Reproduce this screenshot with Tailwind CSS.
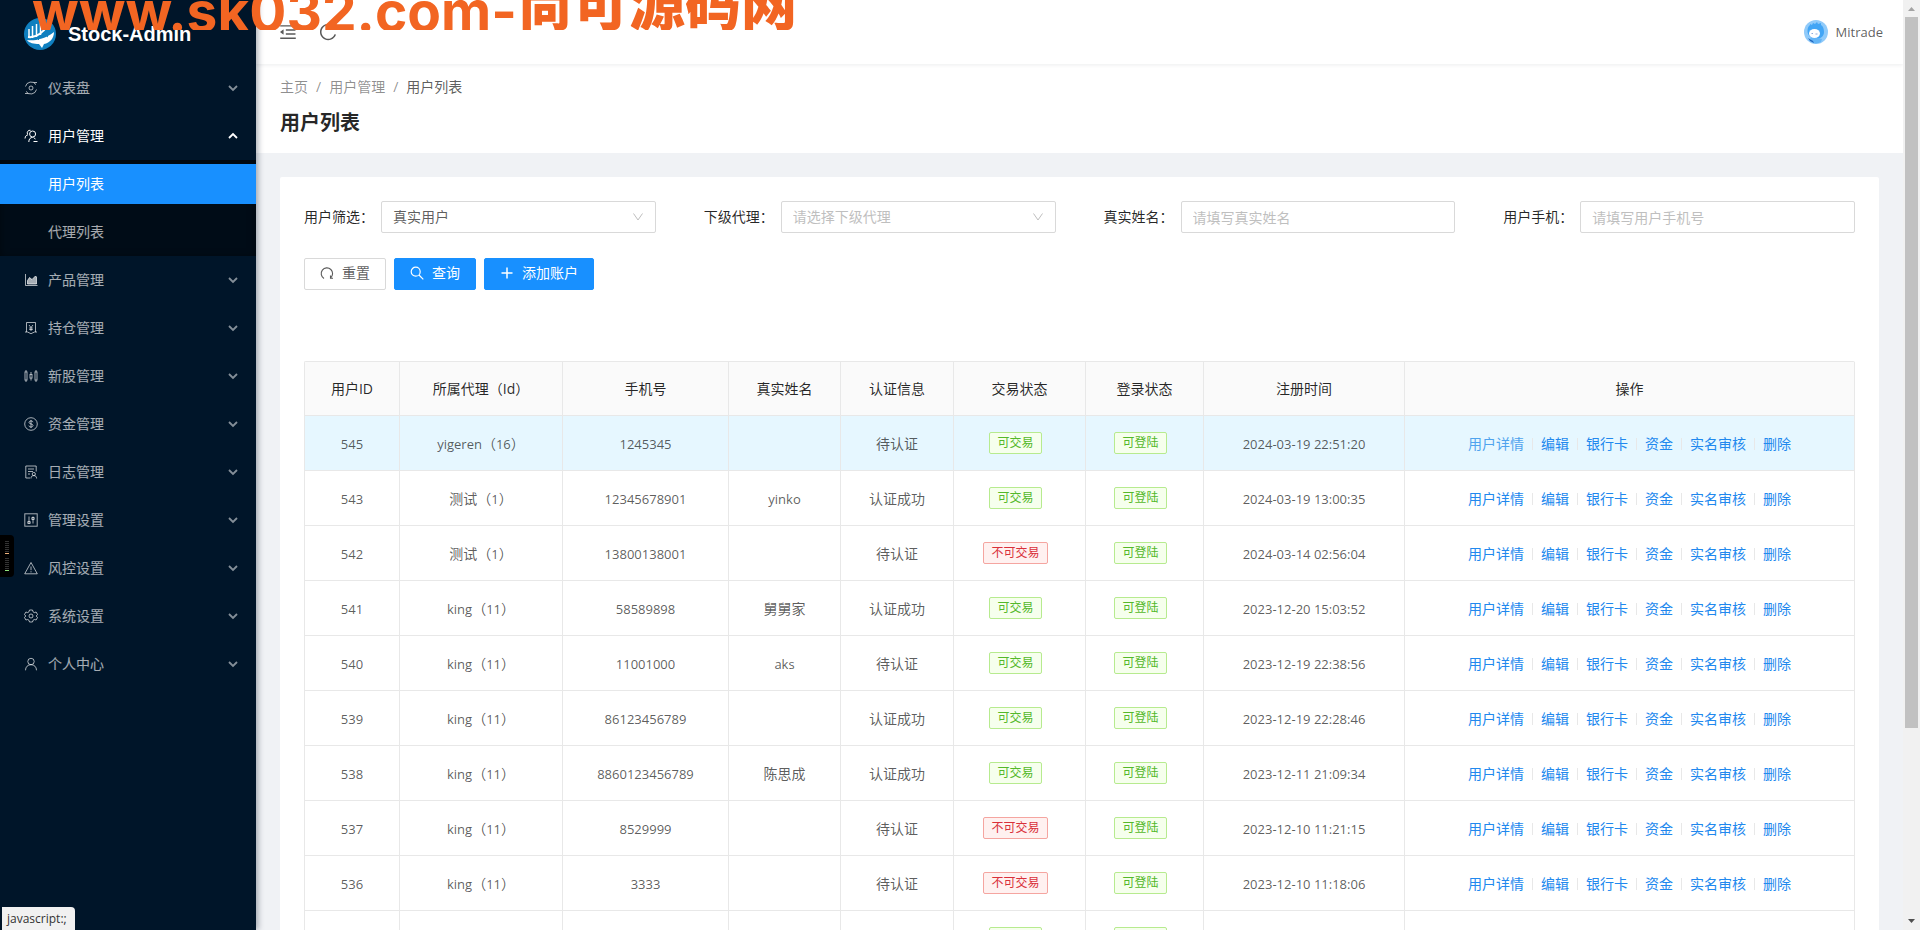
<!DOCTYPE html>
<html lang="zh-CN">
<head>
<meta charset="utf-8">
<meta name="viewport" content="width=device-width, initial-scale=1">
<title>用户列表 - Stock-Admin</title>
<script src="https://cdn.jsdelivr.net/npm/@tailwindcss/browser@4"></script>
</head>
<body class="relative flex h-screen overflow-hidden bg-[#f0f2f5] font-['Open_Sans','Noto_Sans_CJK_SC',sans-serif] text-sm text-black/65">

<aside class="relative z-10 flex h-full w-64 shrink-0 flex-col bg-[#001529] shadow-[2px_0_6px_rgba(0,21,41,0.35)]">
  <a href="#" class="flex h-16 shrink-0 items-center gap-3 pt-1 pl-6 text-white">
    <svg class="size-8" viewBox="0 0 32 32" aria-hidden="true">
      <circle cx="16" cy="16" r="16" fill="#0f7fbf"/>
      <path d="M3 22c6 1 17 0 27-8 0 6-4 11-10 12l-2 4-3-4C10 26 5 25 3 22Z" fill="#fff"/>
      <path d="M5 20V11M8.500 20V8M12.500 19V6M16.500 17V5" stroke="#fff" stroke-width="1.500" fill="none"/>
      <path d="M4 19c8 1 14-3 20-12l2-1-1 5" stroke="#fff" stroke-width="2" fill="none"/>
      <path d="M14 22l6-6 4 3" stroke="#0f7fbf" stroke-width="1" fill="none"/>
    </svg>
    <span class="font-['Liberation_Sans',sans-serif] text-xl font-bold">Stock-Admin</span>
  </a>
  <nav id="menu" class="flex flex-col"></nav>
</aside>

<div class="flex h-full min-w-0 flex-1 flex-col overflow-hidden">
  <header class="relative z-5 flex h-16 shrink-0 items-center bg-white pr-5 pl-[22px] shadow-[0_1px_4px_rgba(0,21,41,0.08)]">
    <button type="button" aria-label="收起菜单" class="mr-5">
      <svg class="size-5" viewBox="0 0 1024 1024" fill="#595959"><path d="M408 442h480c4.400 0 8-3.600 8-8v-56c0-4.400-3.600-8-8-8H408c-4.400 0-8 3.600-8 8v56c0 4.400 3.600 8 8 8zm-8 204c0 4.400 3.600 8 8 8h480c4.400 0 8-3.600 8-8v-56c0-4.400-3.600-8-8-8H408c-4.400 0-8 3.600-8 8v56zm504-486H120c-4.400 0-8 3.600-8 8v56c0 4.400 3.600 8 8 8h784c4.400 0 8-3.600 8-8v-56c0-4.400-3.600-8-8-8zm0 632H120c-4.400 0-8 3.600-8 8v56c0 4.400 3.600 8 8 8h784c4.400 0 8-3.600 8-8v-56c0-4.400-3.600-8-8-8zM115.400 518.900L271.700 642c5.800 4.600 14.400.5 14.400-6.900V388.900c0-7.400-8.500-11.500-14.400-6.900L115.400 505.100a8.740 8.740 0 0 0 0 13.800z"/></svg>
    </button>
    <button type="button" aria-label="刷新">
      <svg class="size-5" viewBox="0 0 1024 1024" fill="#595959"><path d="M909.100 209.300l-56.400 44.100C775.800 155.100 656.200 92 521.900 92 290 92 102.300 279.500 102 511.500 101.700 743.700 289.800 932 521.900 932c181.300 0 335.800-115 394.600-276.100 1.500-4.200-.7-8.900-4.900-10.300l-56.700-19.500a8 8 0 0 0-10.100 4.800c-1.800 5-3.800 10-5.900 14.900-17.300 41-42.100 77.800-73.700 109.400A344.770 344.770 0 0 1 655.900 829c-42.300 17.900-87.400 27-133.800 27-46.500 0-91.500-9.100-133.800-27A341.500 341.500 0 0 1 279 755.200a342.160 342.160 0 0 1-73.700-109.400c-17.900-42.400-27-87.400-27-133.900s9.100-91.500 27-133.900c17.300-41 42.100-77.800 73.700-109.400 31.600-31.600 68.400-56.400 109.300-73.800 42.300-17.900 87.400-27 133.800-27 46.500 0 91.500 9.100 133.800 27a341.500 341.500 0 0 1 109.300 73.800c9.900 9.900 19.200 20.400 27.800 31.400l-60.200 47a8 8 0 0 0 3 14.100l175.600 43c5 1.200 9.900-2.600 9.900-7.700l.8-180.900c-.1-6.600-7.800-10.300-13-6.200z"/></svg>
    </button>
    <a href="#" class="ml-auto flex items-center gap-2 text-[13px]">
      <svg class="size-6" viewBox="0 0 24 24" aria-hidden="true">
        <circle cx="12" cy="12" r="12" fill="#90caf9"/>
        <path d="M6 4l2 1 1-2 2 1 2-2 1 2 3-1v2c2 1 3 4 3 7 0 4-3 7-8 7S3.500 15 3.500 11C3.500 8 4.500 6 6 5Z" fill="#42a5f5"/>
        <path d="M6 18l3 5c3 1 6 0 8-1l1-3-5-1Z" fill="#64b5f6"/>
        <path d="M4 18l5 3 1 2-4-2Z" fill="#1e66c0"/>
        <ellipse cx="10.500" cy="13.500" rx="5.500" ry="4.500" fill="#fff"/>
        <path d="M7.500 13.500h1.500M11.500 14h2" stroke="#8faadc" stroke-width="1"/>
      </svg>
      <span>Mitrade</span>
    </a>
  </header>

  <div class="flex shrink-0 flex-col bg-white px-6 pt-3 pb-4">
    <nav aria-label="面包屑" class="flex h-[22px] items-center gap-2 text-black/45">
      <a href="#">主页</a><span>/</span><a href="#">用户管理</a><span>/</span><span class="text-black/65">用户列表</span>
    </nav>
    <h1 class="mt-[9px] h-[30px] text-xl leading-8 font-bold text-black/85">用户列表</h1>
  </div>

  <main class="mx-6 mt-6 rounded-xs bg-white p-6">
    <form class="grid grid-cols-4 gap-x-12 text-black/85">
      <div class="flex items-center">
        <label for="kind" class="w-[77px] shrink-0">用户筛选：</label>
        <div class="relative flex-1">
          <select id="kind" class="h-8 w-full appearance-none rounded-xs border border-[#d9d9d9] bg-white px-[11px] text-black/65"><option>真实用户</option></select>
          <svg class="pointer-events-none absolute top-2.5 right-3 size-3" viewBox="0 0 12 12" fill="none" stroke="#bfbfbf"><path d="M1.500 2.500 6 9l4.500-6.500"/></svg>
        </div>
      </div>
      <div class="flex items-center">
        <label for="agent" class="w-[77px] shrink-0">下级代理：</label>
        <div class="relative flex-1">
          <select id="agent" class="h-8 w-full appearance-none rounded-xs border border-[#d9d9d9] bg-white px-[11px] text-[#bfbfbf]"><option>请选择下级代理</option></select>
          <svg class="pointer-events-none absolute top-2.5 right-3 size-3" viewBox="0 0 12 12" fill="none" stroke="#bfbfbf"><path d="M1.500 2.500 6 9l4.500-6.500"/></svg>
        </div>
      </div>
      <div class="flex items-center">
        <label for="realname" class="w-[77px] shrink-0">真实姓名：</label>
        <input id="realname" type="text" placeholder="请填写真实姓名" class="h-8 min-w-0 flex-1 rounded-xs border border-[#d9d9d9] px-[11px] placeholder:text-[#bfbfbf]">
      </div>
      <div class="flex items-center">
        <label for="phone" class="w-[77px] shrink-0">用户手机：</label>
        <input id="phone" type="text" placeholder="请填写用户手机号" class="h-8 min-w-0 flex-1 rounded-xs border border-[#d9d9d9] px-[11px] placeholder:text-[#bfbfbf]">
      </div>
    </form>
    <div class="mt-[25px] flex gap-2">
      <button type="button" class="flex h-8 items-center gap-2 rounded-xs border border-[#d9d9d9] bg-white px-[15px] pb-0.5">
        <svg class="size-3.5" viewBox="0 0 14 14" fill="none" stroke="#595959" stroke-width="1.100"><path d="M4 12.500A5.700 5.700 0 1 1 10.500 12M10.500 9.500V12.200H13"/></svg>重置</button>
      <button type="button" class="flex h-8 items-center gap-2 rounded-xs border border-[#1890ff] bg-[#1890ff] px-[15px] pb-0.5 text-white">
        <svg class="size-3.5" viewBox="0 0 14 14" fill="none" stroke="#fff" stroke-width="1.200"><circle cx="5.700" cy="5.700" r="4.500"/><path d="M9 9l4.300 4.300"/></svg>查询</button>
      <button type="button" class="flex h-8 items-center gap-2 rounded-xs border border-[#1890ff] bg-[#1890ff] px-[15px] pb-0.5 text-white">
        <svg class="size-3.5" viewBox="0 0 14 14" fill="none" stroke="#fff" stroke-width="1.500"><path d="M7 1.500v11M1.500 7h11"/></svg>添加账户</button>
    </div>
    <table class="mt-[71px] w-full table-fixed border-separate border-spacing-0 rounded-t-xs border-t border-l border-[#e8e8e8] text-center">
      <colgroup>
        <col class="w-[95px]"><col class="w-[163px]"><col class="w-[166px]"><col class="w-[112px]"><col class="w-[113px]"><col class="w-[132px]"><col class="w-[118px]"><col class="w-[201px]"><col class="w-[450px]">
      </colgroup>
      <thead><tr id="head"></tr></thead>
      <tbody id="rows"></tbody>
    </table>
  </main>
</div>

<!-- window scrollbar -->
<div class="flex h-full w-[17px] shrink-0 flex-col items-center bg-[#f1f1f1]" aria-hidden="true">
  <svg class="h-[17px] w-[17px] shrink-0" viewBox="0 0 17 17" fill="#a3a3a3"><path d="M5 11h7L8.500 7Z"/></svg>
  <div class="h-[76.400%] w-[13px] bg-[#c1c1c1]"></div>
  <svg class="mt-auto h-[17px] w-[17px] shrink-0" viewBox="0 0 17 17" fill="#505050"><path d="M5 6h7L8.500 10Z"/></svg>
</div>

<!-- watermark banner -->
<div class="pointer-events-none absolute top-0 left-8 z-20 flex h-[30px] items-end overflow-hidden font-['Inter','Noto_Sans_CJK_SC',sans-serif] font-bold whitespace-nowrap text-[#f26522]">
  <span class="-mb-3.5 text-[55px] leading-[66px]">www.sk032.com-</span><span class="-mb-2 text-[56px] leading-[66px] font-black">尚可源码网</span>
</div>

<!-- level meter -->
<div class="absolute top-[535px] left-0 z-20 flex h-[42px] w-3.5 flex-col items-center justify-center gap-1 rounded-r-sm bg-black" aria-hidden="true">
  <div class="flex flex-col gap-px"><i class="h-px w-1 bg-[#333]"></i><i class="h-px w-1 bg-[#333]"></i><i class="h-px w-1 bg-[#333]"></i><i class="h-px w-1 bg-[#333]"></i><i class="h-px w-1 bg-[#333]"></i><i class="h-px w-1 bg-[#333]"></i><i class="h-px w-1 bg-[#f0b27a]"></i></div>
  <div class="flex flex-col gap-px"><i class="h-px w-1 bg-[#333]"></i><i class="h-px w-1 bg-[#333]"></i><i class="h-px w-1 bg-[#333]"></i><i class="h-px w-1 bg-[#333]"></i><i class="h-px w-1 bg-[#333]"></i><i class="h-px w-1 bg-[#333]"></i><i class="h-px w-1 bg-[#8fe07a]"></i></div>
</div>

<!-- browser status bubble -->
<div class="absolute bottom-0 left-0.5 z-20 h-[23px] rounded-tr-sm bg-[#f1f1f1] pr-2 pl-[5px] text-xs leading-6 text-[#333]">javascript:;</div>

<script>
const icons = {
  dash: '<path d="M1.500 5.500A5.800 5.800 0 0 1 12 3.600M12.500 8.500A5.800 5.800 0 0 1 2 10.400M1 12.500h3.500M9.500 1.500H13"/><circle cx="7" cy="7" r="2"/>',
  users: '<circle cx="8.600" cy="5" r="3"/><path d="M4.800 13c0-3 1.600-4.600 3.800-4.600M1 9.500C1.200 7 2.500 6 4 5.800M6.500 1.300A2.700 2.700 0 0 0 3.600 5.300M9.500 12.500h4M9.500 8.500l2 1.500"/>',
  area: '<path d="M1.500 1v11.500H13.500"/><path fill="currentColor" d="M3.500 11V7.500l2-3 2.500 2 3.500-3.500L12.500 4v7Z"/>',
  hold: '<path d="M2.500 11V1.500h9V11M1 11h2.500l3.500 1.700L10.500 11H13M5 4l2 2.500L9 4M7 6.500V10M5.200 7h3.600M5.200 8.500h3.600"/>',
  stock: '<rect x="1" y="3" width="2" height="8"/><path d="M2 1v2M2 11v2M12 1v2M12 11v2M7 3v2.500M7 9v2.500"/><rect x="6" y="5.500" width="2" height="3.500"/><rect x="11" y="3" width="2" height="8"/>',
  money: '<circle cx="7" cy="7" r="6.300"/><path d="M9 5.200C8.800 4.300 8 4 7 4S5 4.500 5 5.400C5 7.500 9 6.300 9 8.500 9 9.500 8 10 7 10S5 9.600 4.900 8.600M7 3v8"/>',
  log: '<path d="M6 13H1.800V1h10.400v5.500M4 4h6M4 6.500h5M4 9h2"/><circle cx="9.800" cy="9" r="1.600"/><path d="M7 13.500c0-2 1-2.900 2.800-2.900s2.800.9 2.800 2.900"/>',
  ctrl: '<rect x=".8" y=".8" width="12.400" height="12.400"/><path d="M5 3.500v7M9 3.500v7M3.800 8.500h2.400v2H3.800ZM7.800 4.500h2.400v2H7.800Z"/>',
  warn: '<path d="M7 1.500 13.300 12.800H.7ZM7 5.500v3.700M7 10.200v1.200"/>',
  gear: '<path d="M5.500 1h3l.5 1.800 1.300.8L12.100 3l1.400 2.500L12.200 7l1.300 1.500L12.100 11l-1.800-.5-1.300.8-.5 1.700h-3L5 11.300l-1.300-.8-1.800.5L.5 8.500 1.800 7 .5 5.500 1.900 3l1.800.6L5 2.800Z"/><circle cx="7" cy="7" r="2"/>',
  user: '<circle cx="7" cy="4.500" r="3.200"/><path d="M1.500 13.300c0-3.500 2.300-5.600 5.500-5.600s5.500 2.100 5.500 5.600"/>'
};
const menu = [['dash','仪表盘'],['users','用户管理',true],['area','产品管理'],['hold','持仓管理'],['stock','新股管理'],['money','资金管理'],['log','日志管理'],['ctrl','管理设置'],['warn','风控设置'],['gear','系统设置'],['user','个人中心']];
document.getElementById('menu').innerHTML = menu.map(([icon, label, open]) => `
  <button type="button" class="${open ? 'my-1 flex h-10 items-center gap-2.5 pr-[18px] pl-6 text-white' : 'my-1 flex h-10 items-center gap-2.5 pr-[18px] pl-6 text-white/65'}">
    <svg class="size-3.5" viewBox="0 0 14 14" fill="none" stroke="currentColor" stroke-width="1">${icons[icon]}</svg>
    <span>${label}</span>
    <svg class="${open ? 'ml-auto size-2.5' : 'ml-auto size-2.5 opacity-80'}" viewBox="0 0 10 10" fill="none" stroke="currentColor" stroke-width="1.800"><path d="${open ? 'M1 7l4-4 4 4' : 'M1 3l4 4 4-4'}"/></svg>
  </button>` + (open ? `
  <div class="flex flex-col gap-2 bg-[#000c17] py-1 shadow-[inset_0_2px_8px_rgba(0,0,0,0.45)]">
    <a href="#" class="flex h-10 items-center bg-[#1890ff] pl-12 text-white">用户列表</a>
    <a href="#" class="flex h-10 items-center pl-12 text-white/65">代理列表</a>
  </div>` : '')).join('');

document.getElementById('head').innerHTML = ['用户ID','所属代理（Id）','手机号','真实姓名','认证信息','交易状态','登录状态','注册时间','操作']
  .map(t => `<th scope="col" class="h-[54px] border-r border-b border-[#e8e8e8] bg-[#fafafa] p-0 font-normal text-black/85">${t}</th>`).join('');

const data = [
  ['545','yigeren','16','1245345','','待认证',1,'2024-03-19 22:51:20'],
  ['543','测试','1','12345678901','yinko','认证成功',1,'2024-03-19 13:00:35'],
  ['542','测试','1','13800138001','','待认证',0,'2024-03-14 02:56:04'],
  ['541','king','11','58589898','舅舅家','认证成功',1,'2023-12-20 15:03:52'],
  ['540','king','11','11001000','aks','待认证',1,'2023-12-19 22:38:56'],
  ['539','king','11','86123456789','','认证成功',1,'2023-12-19 22:28:46'],
  ['538','king','11','8860123456789','陈思成','认证成功',1,'2023-12-11 21:09:34'],
  ['537','king','11','8529999','','待认证',0,'2023-12-10 11:21:15'],
  ['536','king','11','3333','','待认证',0,'2023-12-10 11:18:06'],
  ['','','','','','',1,'']
];
const lat = t => t.replace(/[\x20-\x7e]+/g, m => `<span class="text-[13px]">${m}</span>`);
const cell = html => `<td class="h-[55px] border-r border-b border-[#e8e8e8] px-0 pt-0.5 pb-0">${html}</td>`;
const tagCell = html => `<td class="h-[55px] border-r border-b border-[#e8e8e8] p-0">${html}</td>`;
const green = t => `<span class="mr-2 inline-block h-[22px] rounded-xs border border-[#b7eb8f] bg-[#f6ffed] px-[7px] align-middle text-xs leading-5 text-[#54b82a]">${t}</span>`;
const red = t => `<span class="mr-2 inline-block h-[22px] rounded-xs border border-[#f5a5a0] bg-[#fff1f0] px-[7px] align-middle text-xs leading-5 text-[#d9303a]">${t}</span>`;
const acts = i => '<div class="flex items-center justify-center gap-2">' + ['用户详情','编辑','银行卡','资金','实名审核','删除']
  .map((t, n) => `<a href="#" class="${i === 0 && n === 0 ? 'text-[#4fa3ee]' : 'text-[#2188ee]'}">${t}</a>`)
  .join('<span class="h-3 w-px bg-[#e8e8e8]"></span>') + '</div>';
document.getElementById('rows').innerHTML = data.map((r, i) => `<tr class="${i === 0 ? 'bg-[#e6f7ff]' : 'bg-white'}">` +
  cell(lat(r[0])) + cell(r[1] ? lat(`${r[1]}（${r[2]}）`) : '') + cell(lat(r[3])) + cell(lat(r[4])) + cell(r[5]) +
  tagCell(r[6] ? green('可交易') : red('不可交易')) + tagCell(green('可登陆')) + cell(lat(r[7])) + cell(r[0] ? acts(i) : '') + '</tr>').join('');
</script>
</body>
</html>
